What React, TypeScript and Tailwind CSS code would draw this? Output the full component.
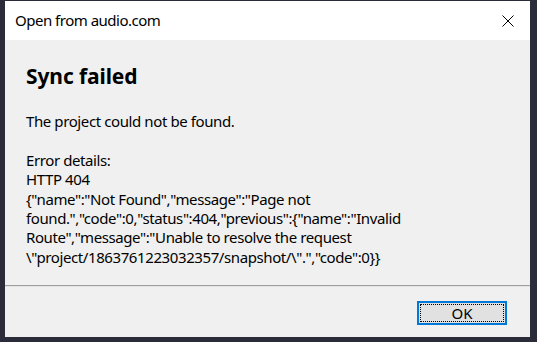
import React from "react";

const FONT = { fontFamily: '"Noto Sans", "Open Sans", sans-serif' };

const lines = [
  "Error details:",
  "HTTP 404",
  '{"name":"Not Found","message":"Page not',
  'found.","code":0,"status":404,"previous":{"name":"Invalid',
  'Route","message":"Unable to resolve the request',
  '\\"project/1863761223032357/snapshot/\\".","code":0}}',
];

export default function App() {
  return (
    <div className="w-[537px] h-[342px] bg-[#2a2c39] pt-px pl-[5px] overflow-hidden" style={FONT}>
      <div className="w-[525px] h-[336px] bg-[#f0f0f0] flex flex-col">
        {/* Title bar */}
        <div className="h-[39px] bg-white flex items-center justify-between pl-[10px] pr-[15px]">
          <span className="text-[15px] text-black tracking-[-0.5px]">Open from audio.com</span>
          <svg width="12" height="12" viewBox="0 0 12 12" className="mr-[1px]">
            <path d="M0.5 0.5 L11.5 11.5 M11.5 0.5 L0.5 11.5" stroke="#000" strokeWidth="1" fill="none" />
          </svg>
        </div>

        {/* Body */}
        <div className="flex-1 pl-[21px] pt-[22px] text-black">
          <h1 className="text-[21px] font-bold leading-[28px] tracking-[-0.1px]">Sync failed</h1>
          <div className="mt-[22px] text-[15px] leading-[19.4px] tracking-[-0.4px]">
            <p>The project could not be found.</p>
            <p className="mt-[19.4px]">
              {lines.map((l, i) => (
                <span key={i} className="block">{l}</span>
              ))}
            </p>
          </div>
        </div>

        {/* Separator */}
        <div className="h-px bg-[#a0a0a0]" />
        <div className="h-px bg-[#e3e3e3]" />

        {/* Footer */}
        <div className="h-[50px] flex items-start justify-end pr-[23px] pt-[14px]">
          <button className="w-[90px] h-[24px] border-2 border-[#0078d7] bg-[#e1e1e1] p-px flex">
            <span className="flex-1 border border-dotted border-black flex items-center justify-center text-[15px] leading-none text-black">
              OK
            </span>
          </button>
        </div>
      </div>
    </div>
  );
}
